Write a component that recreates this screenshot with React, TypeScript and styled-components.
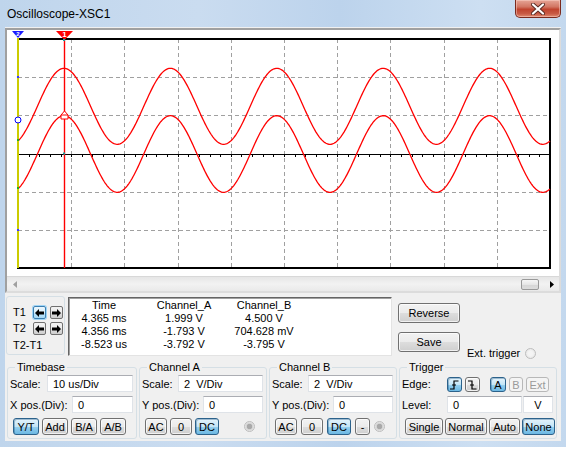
import React from 'react';
import styled, { createGlobalStyle, css } from 'styled-components';

const GlobalStyle = createGlobalStyle`
  html, body { margin: 0; padding: 0; background: #ffffff; }
  body { font-family: "Liberation Sans", Arial, sans-serif; font-size: 11px; color: #000; }
  * { box-sizing: border-box; }
`;

// scope geometry in canvas coords (canvas sits at page x 7, y 30)
const CW = 552;
const CH = 246;
const X0 = 11;
const X1 = 543;
const Y0 = 9;
const Y1 = 238;
const DX = (X1 - X0) / 10;
const DY = (Y1 - Y0) / 6;
const MID = Y0 + 3 * DY;
const C1 = 57;

const wave = (center: number, amp: number) => {
  let d = '';
  for (let x = X0; x <= X1; x += 1) {
    const y = center - amp * Math.cos((2 * Math.PI * (x - C1)) / (2 * DX));
    d += `${x === X0 ? 'M' : 'L'}${x},${y.toFixed(2)} `;
  }
  return d;
};

const traceA = wave(76.3, 38);
const traceB = wave(MID + 0.5, 38.3);

const px = (v: number) => Math.round(v) + 0.5;

const Scope = () => {
  const vlines = Array.from({ length: 9 }, (_, i) => px(X0 + (i + 1) * DX));
  const hlines = [1, 2, 4, 5].map((j) => px(Y0 + j * DY));
  const ticks = Array.from({ length: 49 }, (_, i) => px(X0 + ((i + 1) * DX) / 5));
  return (
    <Canvas width={CW} height={CH} viewBox={`0 0 ${CW} ${CH}`}>
      <g stroke="#a0a0a0" strokeDasharray="4 3" shapeRendering="crispEdges">
        {vlines.map((x) => (
          <line key={x} x1={x} x2={x} y1={Y0} y2={Y1} />
        ))}
        {hlines.map((y) => (
          <line key={y} x1={X0} x2={X1} y1={y} y2={y} />
        ))}
      </g>
      <g stroke="#000" shapeRendering="crispEdges">
        <line x1={X0} x2={X1} y1={px(MID)} y2={px(MID)} strokeWidth={1.5} />
        {ticks.map((x) => (
          <line key={x} x1={x} x2={x} y1={MID} y2={MID + 3} />
        ))}
      </g>
      <rect x={X0} y={Y0} width={X1 - X0} height={Y1 - Y0} fill="none" stroke="#000" strokeWidth={2} shapeRendering="crispEdges" />
      <path d={traceA} fill="none" stroke="#ff0000" strokeWidth={1.3} />
      <path d={traceB} fill="none" stroke="#ff0000" strokeWidth={1.3} />
      {/* cursor 2 */}
      <line x1={X0} x2={X0} y1={Y0 - 1} y2={Y1} stroke="#ffff00" strokeWidth={1.6} />
      <path d={`M${X0 - 6},1 L${X0 + 6},1 L${X0},8 Z`} fill="#1a1aff" />
      <text x={X0} y={6} fontSize={6} fill="#fff" fontWeight="bold" textAnchor="middle" fontFamily="Liberation Sans, sans-serif">2</text>
      <rect x={X0 - 1} y={46} width={2} height={2} fill="#3a3aff" />
      <rect x={X0 - 1} y={199} width={2} height={2} fill="#3a3aff" />
      <rect x={X0 - 1} y={109} width={2} height={2} fill="#20b020" />
      <rect x={X0 - 1} y={157} width={2} height={2} fill="#20b020" />
      <circle cx={X0} cy={90} r={3} fill="#fff" stroke="#0000ff" strokeWidth={1} />
      {/* cursor 1 */}
      <line x1={px(C1)} x2={px(C1)} y1={1} y2={Y1} stroke="#ff0000" strokeWidth={1.4} />
      <path d={`M${C1 - 8},1 L${C1 + 9},1 L${C1 + 0.5},10 Z`} fill="#ff0000" />
      <text x={C1 + 0.5} y={7} fontSize={8} fill="#fff" fontWeight="bold" textAnchor="middle" fontFamily="Liberation Sans, sans-serif">1</text>
      <rect x={C1 - 1} y={Y0} width={2} height={2} fill="#20a0a0" />
      <rect x={C1 - 1} y={MID - 1} width={2} height={2} fill="#20a0a0" />
      <path d={`M${C1 - 3},89 L${C1 - 3},85 L${C1 + 0.5},81 L${C1 + 4},85 L${C1 + 4},89 Z M${C1 - 3},85 L${C1 + 4},85`} fill="#fff" stroke="#ff0000" strokeWidth={1} />
    </Canvas>
  );
};

const Arrow = ({ dir }: { dir: 'left' | 'right' }) => (
  <svg width="9" height="8" viewBox="0 0 9 8">
    <path
      d={dir === 'left' ? 'M0 4 L4 0 L4 2.5 L9 2.5 L9 5.5 L4 5.5 L4 8 Z' : 'M9 4 L5 0 L5 2.5 L0 2.5 L0 5.5 L5 5.5 L5 8 Z'}
      fill="#000"
    />
  </svg>
);

const EdgeIcon = ({ rising }: { rising: boolean }) => (
  <svg width="9" height="10" viewBox="0 0 9 10">
    <path
      d={rising ? 'M0 9 H4 V1 H8.5 M2 5 H6' : 'M0 1 H4 V9 H8.5 M2 5 H6'}
      fill="none"
      stroke="#000"
      strokeWidth={1.2}
    />
  </svg>
);

const Tri = ({ dir, color }: { dir: 'left' | 'right'; color: string }) => (
  <svg width="4" height="7" viewBox="0 0 4 7">
    <path d={dir === 'left' ? 'M4 0 L0 3.5 L4 7 Z' : 'M0 0 L4 3.5 L0 7 Z'} fill={color} />
  </svg>
);

const CloseGlyph = () => (
  <svg width="14" height="12" viewBox="0 0 14 12">
    <path d="M2 1.5 L12 10.5 M12 1.5 L2 10.5" stroke="#5a2a22" strokeWidth={4} strokeLinecap="round" />
    <path d="M2 1.5 L12 10.5 M12 1.5 L2 10.5" stroke="#fff" strokeWidth={2.2} strokeLinecap="round" />
  </svg>
);

export default function App() {
  return (
    <>
      <GlobalStyle />
      <Window>
        <TitleBar>
          <Title>Oscilloscope-XSC1</Title>
          <CloseButton>
            <CloseGlyph />
          </CloseButton>
        </TitleBar>
        <Client>
          <ScopePanel>
            <Scope />
            <HScroll>
              <ScrollArrow>
                <Tri dir="left" color="#a0a0a0" />
              </ScrollArrow>
              <Track>
                <Thumb />
              </Track>
              <ScrollArrow>
                <Tri dir="right" color="#000" />
              </ScrollArrow>
            </HScroll>
          </ScopePanel>

          <CursorRow>
            <CursorBox>
              <CursorLabel>T1</CursorLabel>
              <ArrowPair>
                <ArrowButton $on>
                  <Arrow dir="left" />
                </ArrowButton>
                <ArrowButton>
                  <Arrow dir="right" />
                </ArrowButton>
              </ArrowPair>
              <CursorLabel>T2</CursorLabel>
              <ArrowPair>
                <ArrowButton>
                  <Arrow dir="left" />
                </ArrowButton>
                <ArrowButton>
                  <Arrow dir="right" />
                </ArrowButton>
              </ArrowPair>
              <CursorLabel $span>T2-T1</CursorLabel>
            </CursorBox>
            <Readout>
              <Cell>Time</Cell>
              <Cell>Channel_A</Cell>
              <Cell>Channel_B</Cell>
              <Cell>4.365 ms</Cell>
              <Cell>1.999 V</Cell>
              <Cell>4.500 V</Cell>
              <Cell>4.356 ms</Cell>
              <Cell>-1.793 V</Cell>
              <Cell>704.628 mV</Cell>
              <Cell>-8.523 us</Cell>
              <Cell>-3.792 V</Cell>
              <Cell>-3.795 V</Cell>
            </Readout>
            <SideButtons>
              <Button $w={62} $h={20}>Reverse</Button>
              <Button $w={62} $h={20}>Save</Button>
            </SideButtons>
            <ExtTrigger>
              Ext. trigger
              <Radio />
            </ExtTrigger>
          </CursorRow>

          <Groups>
            <Group $w={130}>
              <Legend>Timebase</Legend>
              <Row>
                <Label $w={37}>Scale:</Label>
                <Input>10 us/Div</Input>
              </Row>
              <Row>
                <Label $w={62}>X pos.(Div):</Label>
                <Input>0</Input>
              </Row>
              <ButtonRow $gap={3}>
                <Button $w={26} $variant="on">Y/T</Button>
                <Button $w={26}>Add</Button>
                <Button $w={26}>B/A</Button>
                <Button $w={26}>A/B</Button>
              </ButtonRow>
            </Group>

            <Group $w={128}>
              <Legend>Channel A</Legend>
              <Row>
                <Label $w={36}>Scale:</Label>
                <Input>2&nbsp; V/Div</Input>
              </Row>
              <Row>
                <Label $w={61}>Y pos.(Div):</Label>
                <Input>0</Input>
              </Row>
              <ButtonRow $gap={3}>
                <Button $w={22}>AC</Button>
                <Button $w={22}>0</Button>
                <Button $w={24} $variant="on">DC</Button>
                <Radio $dot />
              </ButtonRow>
            </Group>

            <Group $w={128}>
              <Legend>Channel B</Legend>
              <Row>
                <Label $w={36}>Scale:</Label>
                <Input>2&nbsp; V/Div</Input>
              </Row>
              <Row>
                <Label $w={61}>Y pos.(Div):</Label>
                <Input>0</Input>
              </Row>
              <ButtonRow $gap={4}>
                <Button $w={22}>AC</Button>
                <Button $w={22}>0</Button>
                <Button $w={24} $variant="on">DC</Button>
                <Button $w={15}>-</Button>
                <Radio $dot />
              </ButtonRow>
            </Group>

            <Group $w={158}>
              <Legend>Trigger</Legend>
              <Row $bottom>
                <Label $w={45}>Edge:</Label>
                <EdgeButtons>
                  <Button $w={15} $h={15} $variant="on">
                    <EdgeIcon rising />
                  </Button>
                  <Button $w={15} $h={15}>
                    <EdgeIcon rising={false} />
                  </Button>
                  <Spacer />
                  <Button $w={16} $h={15} $variant="on">A</Button>
                  <Button $w={14} $h={15} $variant="off">B</Button>
                  <Button $w={23} $h={15} $variant="off">Ext</Button>
                </EdgeButtons>
              </Row>
              <Row>
                <Label $w={45}>Level:</Label>
                <Input>0</Input>
                <UnitBox>V</UnitBox>
              </Row>
              <ButtonRow $gap={2}>
                <Button $w={38}>Single</Button>
                <Button $w={42}>Normal</Button>
                <Button $w={31}>Auto</Button>
                <Button $w={33} $variant="on">None</Button>
              </ButtonRow>
            </Group>
          </Groups>
        </Client>
      </Window>
    </>
  );
}

const Window = styled.div`
  width: 566px;
  height: 447px;
  display: flex;
  flex-direction: column;
  padding: 0 5px 6px 5px;
  background: linear-gradient(90deg, #bfd5ec 0%, #cadcf0 35%, #bcd3ec 60%, #cddff2 85%, #c3d8ee 100%);
`;

const TitleBar = styled.div`
  height: 27px;
  display: flex;
  justify-content: space-between;
  align-items: flex-start;
  flex-shrink: 0;
`;

const Title = styled.div`
  padding: 7px 0 0 2px;
  font-family: "Liberation Sans", Arial, sans-serif;
  font-size: 12px;
  color: #000;
`;

const CloseButton = styled.div`
  width: 46px;
  height: 18px;
  display: flex;
  align-items: center;
  justify-content: center;
  border: 1px solid #7a2a1e;
  border-top: none;
  border-radius: 0 0 5px 5px;
  background: linear-gradient(180deg, #e6a596 0%, #d27663 40%, #c0432e 55%, #c85a44 80%, #e08a70 100%);
  box-shadow: inset 0 0 0 1px rgba(255, 220, 210, 0.45);
`;

const Client = styled.div`
  flex: 1;
  display: flex;
  flex-direction: column;
  background: #f0f0f0;
`;

const ScopePanel = styled.div`
  margin-top: 1px;
  display: flex;
  flex-direction: column;
  border: 2px solid;
  border-color: #a0a0a0 #dcdcdc #dcdcdc #a0a0a0;
  background: #fff;
`;

const Canvas = styled.svg`
  display: block;
  background: #ffffff;
`;

const HScroll = styled.div`
  height: 15px;
  display: flex;
  background: linear-gradient(180deg, #e6e6e6, #f2f2f2 50%, #e9e9e9);
  border-top: 1px solid #d8d8d8;
`;

const ScrollArrow = styled.div`
  width: 15px;
  display: flex;
  align-items: center;
  justify-content: center;
`;

const Track = styled.div`
  flex: 1;
  display: flex;
  align-items: center;
  justify-content: flex-end;
  padding-right: 5px;
`;

const Thumb = styled.div`
  width: 18px;
  height: 11px;
  border: 1px solid #999999;
  border-radius: 2px;
  background: linear-gradient(180deg, #f6f6f6 0%, #e6e6e6 50%, #d6d6d6 51%, #dcdcdc 100%);
`;

const CursorRow = styled.div`
  height: 62px;
  display: flex;
  align-items: flex-start;
  padding-top: 3px;
`;

const CursorBox = styled.div`
  width: 59px;
  height: 59px;
  margin-left: 1px;
  display: grid;
  grid-template-columns: 20px auto;
  grid-template-rows: 14px 14px 1fr;
  row-gap: 2px;
  padding: 9px 0 2px 6px;
  border: 1px solid #d5dfe5;
  border-radius: 3px;
`;

const CursorLabel = styled.div<{ $span?: boolean }>`
  font-size: 11px;
  line-height: 13px;
  ${(p) =>
    p.$span &&
    css`
      grid-column: 1 / span 2;
      align-self: center;
    `}
`;

const ArrowPair = styled.div`
  display: flex;
  gap: 4px;
`;

const ArrowButton = styled.div<{ $on?: boolean }>`
  width: 13px;
  height: 13px;
  display: flex;
  align-items: center;
  justify-content: center;
  border-radius: 2px;
  border: 1px solid ${(p) => (p.$on ? '#3c7fb1' : '#707070')};
  background: ${(p) =>
    p.$on
      ? 'linear-gradient(180deg, #eaf6fd 0%, #d9f0fc 50%, #bee6fd 51%, #a7d9f5 100%)'
      : 'linear-gradient(180deg, #f2f2f2 0%, #ebebeb 50%, #dddddd 51%, #cfcfcf 100%)'};
  box-shadow: ${(p) => (p.$on ? '0 0 0 1px #9fd4f5' : 'none')};
`;

const Readout = styled.div`
  width: 324px;
  height: 59px;
  margin: 1px 0 0 3px;
  display: grid;
  grid-template-columns: 70px 90px 70px;
  grid-auto-rows: 13px;
  padding-top: 1px;
  background: #fff;
  border: 1px solid;
  border-color: #646464 #e3e3e3 #e3e3e3 #646464;
  box-shadow: inset 1px 1px 0 #a0a0a0;
`;

const Cell = styled.div`
  text-align: center;
  white-space: nowrap;
  font-size: 11px;
  line-height: 13px;
`;

const SideButtons = styled.div`
  display: flex;
  flex-direction: column;
  gap: 9px;
  margin-left: 6px;
  padding-top: 7px;
`;

const ExtTrigger = styled.div`
  margin: 51px 0 0 7px;
  display: flex;
  align-items: center;
  gap: 5px;
  font-size: 11px;
  white-space: nowrap;
`;

const Radio = styled.span<{ $dot?: boolean }>`
  width: 11px;
  height: 11px;
  flex-shrink: 0;
  border-radius: 50%;
  border: 1px solid #bdbdbd;
  background: ${(p) =>
    p.$dot
      ? 'radial-gradient(circle, #a9a9a9 0 2.5px, #d2d2d2 3px, #ececec 5px)'
      : 'radial-gradient(circle, #f4f4f4 0 2px, #e8e8e8 5px)'};
  ${(p) =>
    p.$dot &&
    css`
      margin-left: auto;
      margin-right: 8px;
    `}
`;

type Variant = 'normal' | 'on' | 'off';

const Button = styled.div<{ $w: number; $h?: number; $variant?: Variant }>`
  width: ${(p) => p.$w}px;
  height: ${(p) => p.$h ?? 17}px;
  flex-shrink: 0;
  display: flex;
  align-items: center;
  justify-content: center;
  font-size: 11px;
  white-space: nowrap;
  border-radius: 3px;
  border: 1px solid #707070;
  background: linear-gradient(180deg, #f2f2f2 0%, #ebebeb 50%, #dddddd 51%, #cfcfcf 100%);
  box-shadow: inset 0 0 0 1px rgba(255, 255, 255, 0.7);
  ${(p) =>
    p.$variant === 'on' &&
    css`
      border-color: #2c628b;
      background: linear-gradient(180deg, #e5f4fc 0%, #c4e5f6 50%, #98d1ef 51%, #6cb8e3 100%);
      box-shadow: inset 1px 1px 0 rgba(0, 60, 110, 0.3);
    `}
  ${(p) =>
    p.$variant === 'off' &&
    css`
      color: #9a9a9a;
      border-color: #b8b8b8;
      background: #f4f4f4;
      box-shadow: none;
    `}
`;

const Groups = styled.div`
  display: flex;
  gap: 2px;
  margin: 6px 0 0 2px;
`;

const Group = styled.fieldset<{ $w: number }>`
  width: ${(p) => p.$w}px;
  margin: 0;
  padding: 0 3px 3px 2px;
  border: 1px solid #d5dfe5;
  border-radius: 3px;
  display: flex;
  flex-direction: column;
  min-width: 0;
`;

const Legend = styled.legend`
  margin-left: 5px;
  padding: 0 2px;
  font-size: 11px;
  line-height: 13px;
`;

const Row = styled.div<{ $bottom?: boolean }>`
  height: 17px;
  margin-top: 1px;
  display: flex;
  align-items: ${(p) => (p.$bottom ? 'flex-end' : 'center')};
  & + & {
    margin-top: 4px;
  }
`;

const Label = styled.span<{ $w: number }>`
  width: ${(p) => p.$w}px;
  flex-shrink: 0;
  font-size: 11px;
  white-space: nowrap;
  align-self: center;
`;

const Input = styled.div`
  flex: 1;
  height: 17px;
  padding-left: 5px;
  display: flex;
  align-items: center;
  font-size: 11px;
  background: #fff;
  border: 1px solid #dfe3e8;
  border-top-color: #abadb3;
`;

const UnitBox = styled(Input)`
  flex: 0 0 30px;
  margin-left: 1px;
  padding-left: 0;
  justify-content: center;
`;

const EdgeButtons = styled.div`
  display: flex;
  align-items: center;
  gap: 3px;
`;

const Spacer = styled.span`
  width: 4px;
`;

const ButtonRow = styled.div<{ $gap: number }>`
  margin-top: 5px;
  padding-left: 3px;
  display: flex;
  align-items: center;
  gap: ${(p) => p.$gap}px;
`;
